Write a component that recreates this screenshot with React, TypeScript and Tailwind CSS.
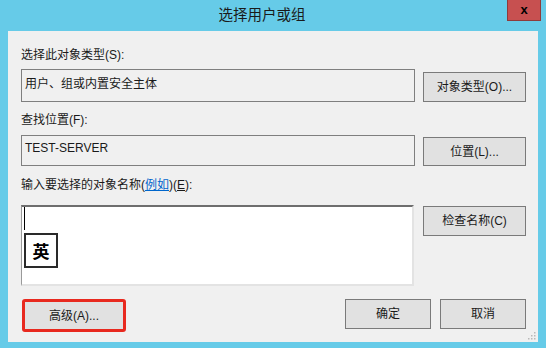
import React from 'react';

const font = { fontFamily: '"Liberation Sans", "Noto Sans CJK SC", sans-serif' };

const WinButton: React.FC<{ label: string; className?: string }> = ({ label, className }) => (
  <div
    className={
      'flex items-center justify-center bg-[#e1e1e1] border border-[#7a7a7a] text-[12px] text-[#1a1a1a] ' +
      (className ?? '')
    }
  >
    {label}
  </div>
);

const ResizeGrip: React.FC = () => (
  <svg width="8" height="8" viewBox="0 0 8 8" className="absolute right-[2px] bottom-[2px]">
    {[
      [6, 0],
      [6, 3],
      [3, 3],
      [6, 6],
      [3, 6],
      [0, 6],
    ].map(([x, y], i) => (
      <rect key={i} x={x} y={y} width="1.5" height="1.5" fill="#b8b8b8" />
    ))}
  </svg>
);

export default function App() {
  return (
    <div className="w-[546px] h-[348px] bg-[#66cbe8] flex flex-col overflow-hidden" style={font}>
      {/* Title bar */}
      <div className="relative h-[31px] shrink-0 flex items-center justify-center pr-[22px]">
        <span className="text-[14.5px] text-[#1a1a1a]">选择用户或组</span>
        <div className="absolute right-[5px] top-0 w-[34px] h-[21px] bg-[#c75050] border border-t-0 border-[#8e3b3b] flex items-center justify-center">
          <span className="text-[13px] font-bold text-black leading-none mt-[-1px]">x</span>
        </div>
      </div>

      {/* Client area */}
      <div className="relative mx-[8px] w-[530px] h-[311px] bg-[#f0f0f0] pl-[13px] pr-[12px] flex flex-col text-[12px] text-[#1a1a1a]">
        <div className="mt-[16px] h-[16px] leading-[16px]">选择此对象类型(S):</div>
        <div className="mt-[6px] flex items-end gap-[8px] h-[33px]">
          <div className="w-[394px] h-[33px] border border-[#7f7f7f] bg-[#f0f0f0] pl-[3px] pt-[6px] leading-[16px]">
            用户、组或内置安全主体
          </div>
          <WinButton label="对象类型(O)..." className="w-[103px] h-[30px]" />
        </div>

        <div className="mt-[10px] h-[16px] leading-[16px]">查找位置(F):</div>
        <div className="mt-[7px] flex items-end gap-[8px] h-[31px]">
          <div className="w-[394px] h-[31px] border border-[#7f7f7f] bg-[#f0f0f0] pl-[3px] pt-[4px] leading-[16px]">
            TEST-SERVER
          </div>
          <WinButton label="位置(L)..." className="w-[103px] h-[29px]" />
        </div>

        <div className="mt-[11px] h-[16px] leading-[16px]">
          输入要选择的对象名称(<span className="text-[#0066cc] underline">例如</span>)(<span className="underline">E</span>):
        </div>
        <div className="mt-[12px] flex items-start gap-[9px] h-[81px]">
          <div className="relative w-[393px] h-[81px] bg-white border-[#9a9a9a] border-l border-t-2 border-t-[#6e6e6e] border-r-2 border-r-[#e3e3e3] border-b-2 border-b-[#e3e3e3]">
            <div className="absolute left-[2px] top-[0px] w-[1px] h-[23px] bg-black" />
            <div className="absolute left-[2px] top-[26px] w-[34px] h-[35px] border-2 border-[#2a2a2a] bg-white flex items-center justify-center">
              <span className="text-[17px] font-bold text-black leading-none" style={{ fontFamily: '"Noto Sans CJK SC", sans-serif' }}>
                英
              </span>
            </div>
          </div>
          <WinButton label="检查名称(C)" className="w-[103px] h-[30px] mt-[1px]" />
        </div>

        <div className="mt-[13px] flex items-start">
          <div className="ml-[1px] w-[104px] h-[33px] border-[3px] border-[#e8291f] rounded-[3px] bg-[#e1e1e1] flex items-center justify-center">
            高级(A)...
          </div>
          <div className="ml-auto flex gap-[9px]">
            <WinButton label="确定" className="w-[86px] h-[30px]" />
            <WinButton label="取消" className="w-[86px] h-[30px]" />
          </div>
        </div>

        <ResizeGrip />
      </div>
    </div>
  );
}
